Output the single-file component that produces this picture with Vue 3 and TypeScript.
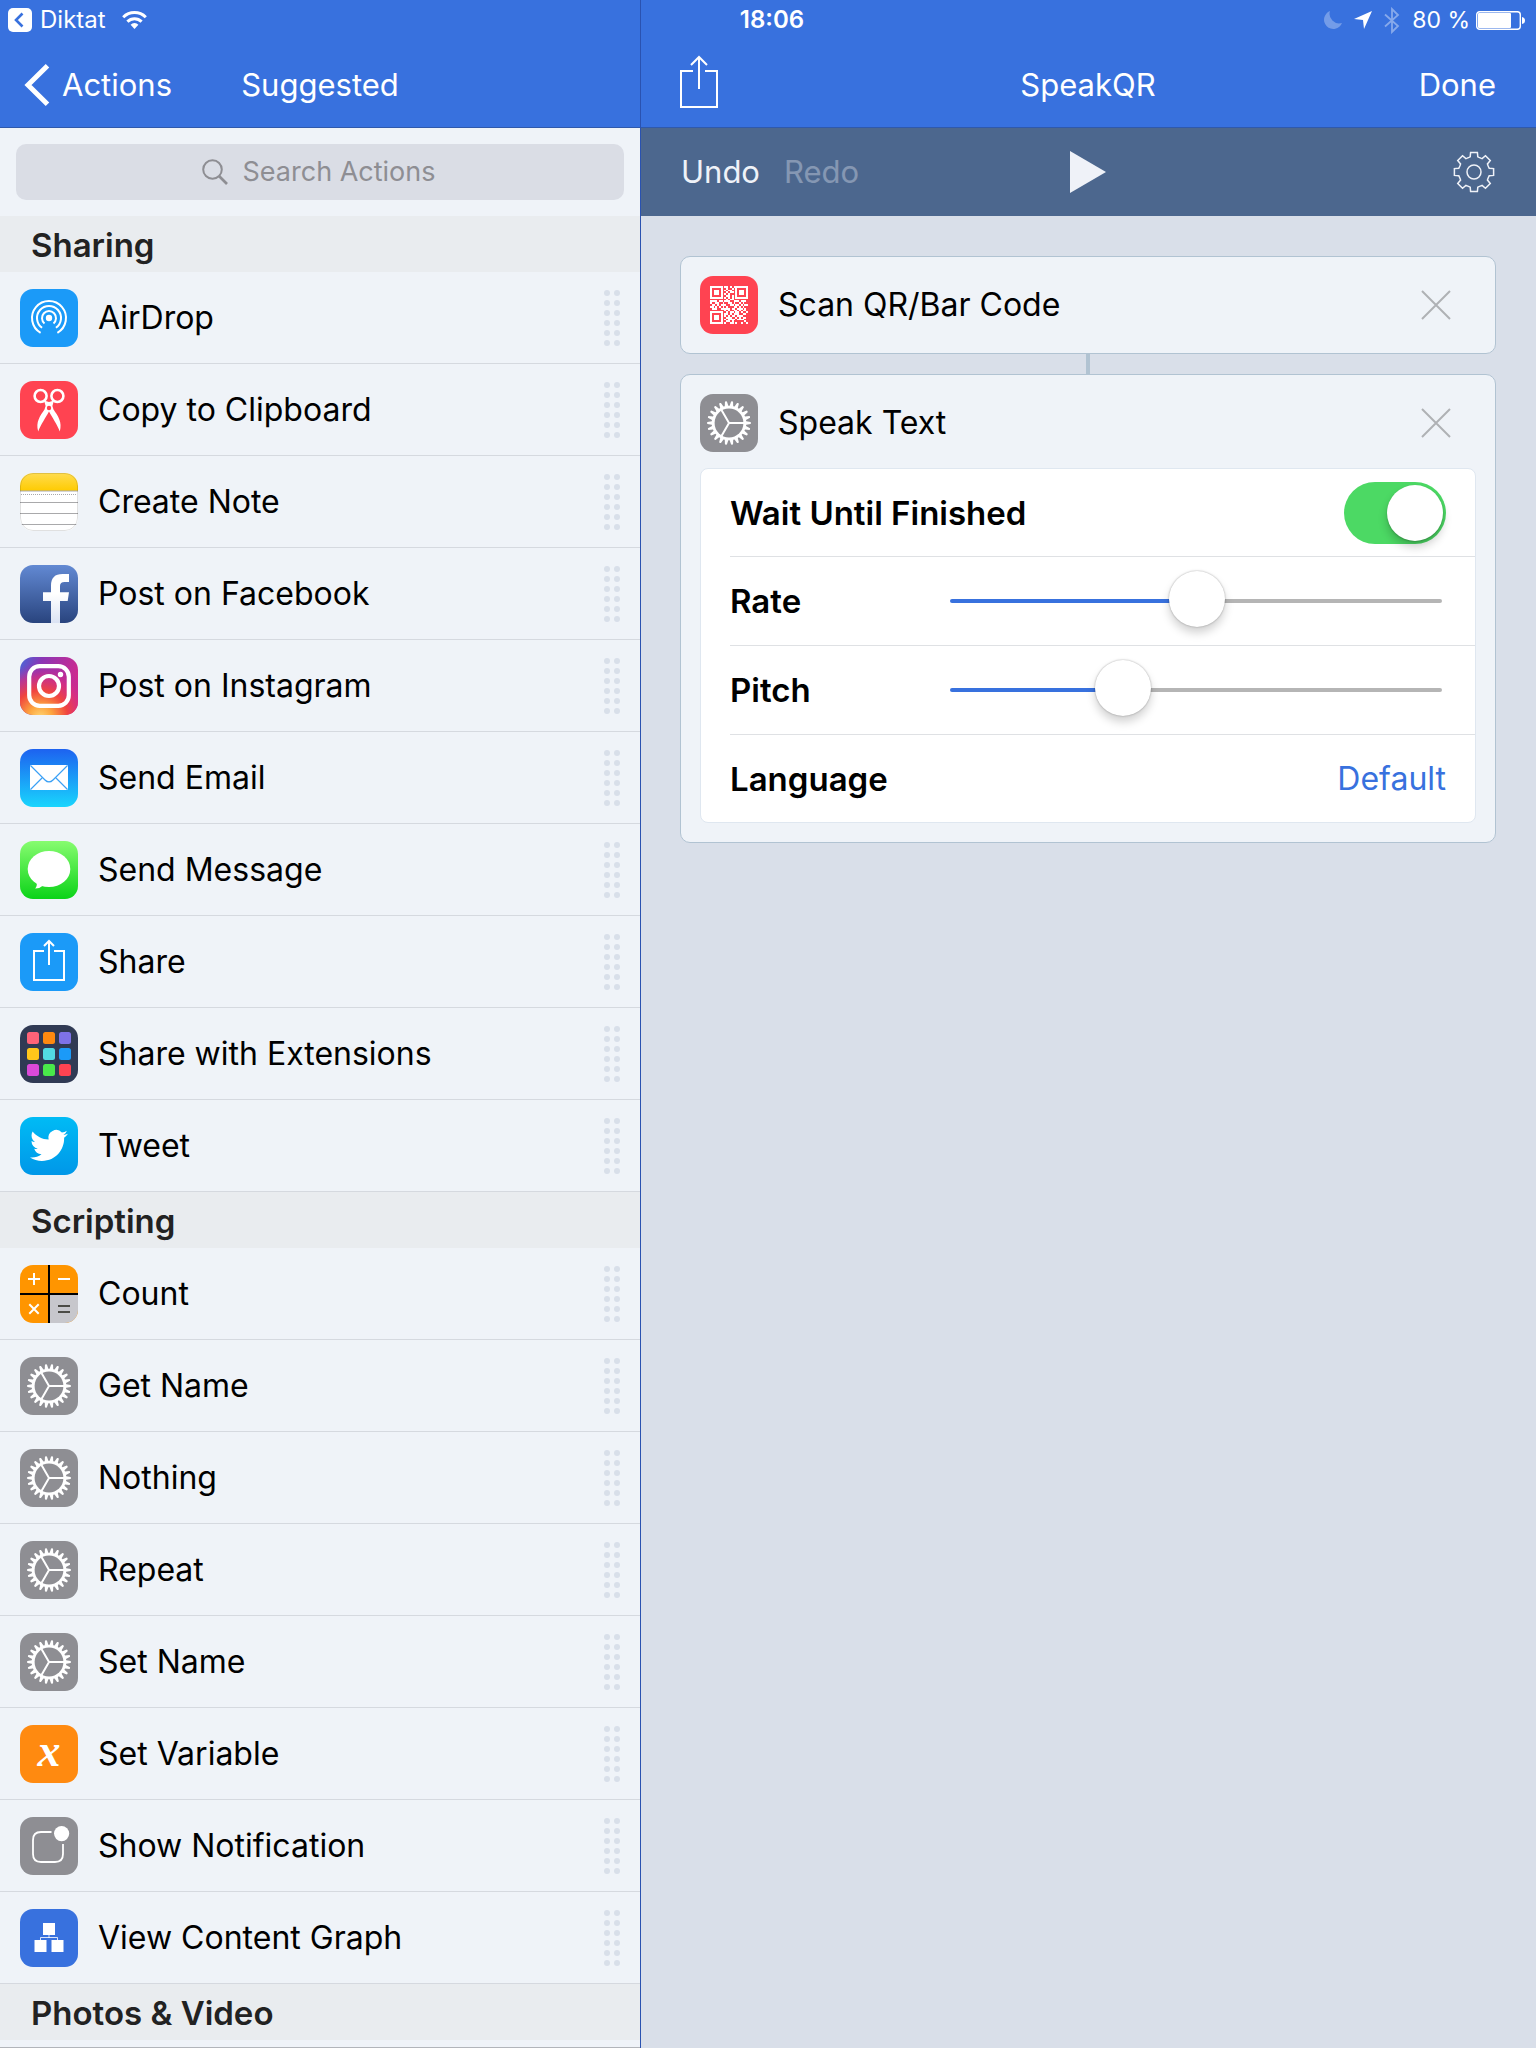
<script setup lang="ts">
import { computed, ref } from 'vue'

type IconName =
  | 'airdrop' | 'scissors' | 'note' | 'facebook' | 'instagram' | 'mail' | 'message' | 'share'
  | 'extensions' | 'twitter' | 'calculator' | 'gear' | 'variable' | 'notification' | 'graph'

interface Action { label: string; icon: IconName }
interface Section { title: string; actions: Action[] }

const sections: Section[] = [
  {
    title: 'Sharing',
    actions: [
      { label: 'AirDrop', icon: 'airdrop' },
      { label: 'Copy to Clipboard', icon: 'scissors' },
      { label: 'Create Note', icon: 'note' },
      { label: 'Post on Facebook', icon: 'facebook' },
      { label: 'Post on Instagram', icon: 'instagram' },
      { label: 'Send Email', icon: 'mail' },
      { label: 'Send Message', icon: 'message' },
      { label: 'Share', icon: 'share' },
      { label: 'Share with Extensions', icon: 'extensions' },
      { label: 'Tweet', icon: 'twitter' },
    ],
  },
  {
    title: 'Scripting',
    actions: [
      { label: 'Count', icon: 'calculator' },
      { label: 'Get Name', icon: 'gear' },
      { label: 'Nothing', icon: 'gear' },
      { label: 'Repeat', icon: 'gear' },
      { label: 'Set Name', icon: 'gear' },
      { label: 'Set Variable', icon: 'variable' },
      { label: 'Show Notification', icon: 'notification' },
      { label: 'View Content Graph', icon: 'graph' },
    ],
  },
  { title: 'Photos & Video', actions: [] },
]

const extensionColors = [
  '#ff6378', '#ff8a10', '#7e72e8',
  '#ffc61a', '#52dbe2', '#1b9af8',
  '#db49d8', '#49e84a', '#ff4351',
]

const query = ref('')
const waitUntilFinished = ref(true)
const rate = ref(502)
const pitch = ref(333)

// The filled part of a track ends under the middle of its thumb.
const fill = (value: number) => ({ '--fill': `${value / 10}%` })
const rateFill = computed(() => fill(rate.value))
const pitchFill = computed(() => fill(pitch.value))

type Point = [number, number]

function gearPath(teeth: number, center: number, outline: Point[]): string {
  const points: string[] = []
  for (let i = 0; i < teeth; i++) {
    const a = (i * 2 * Math.PI) / teeth
    for (const [r, w] of outline) {
      const x = center + r * Math.cos(a) - w * Math.sin(a)
      const y = center + r * Math.sin(a) + w * Math.cos(a)
      points.push(`${x.toFixed(2)} ${y.toFixed(2)}`)
    }
  }
  return `M${points.join('L')}Z`
}

const scriptGear = gearPath(22, 29, [[17.2, -1.8], [21.6, -1], [22, 0], [21.6, 1], [17.2, 1.8]])
const settingsGear = gearPath(8, 21, [[14.6, -5], [15.2, -3.8], [19.6, -3.4], [19.6, 3.4], [15.2, 3.8], [14.6, 5]])

const qrRows = [
  '111111101101011111111',
  '100000100100101000001',
  '101110101011001011101',
  '101110100101101011101',
  '101110101010001011101',
  '100000100110101000001',
  '111111101010101111111',
  '000000000101100000000',
  '111101101110011101110',
  '100110010011010010100',
  '011010111001101101011',
  '110101010100011010100',
  '011100111110110111010',
  '000000001010011010110',
  '111111100101101101001',
  '100000101101011100110',
  '101110101010110111000',
  '101110100111001010110',
  '101110101011110111100',
  '100000100110100000010',
  '111111101001101001001',
]
const qrPath = qrRows
  .flatMap((row, y) => [...row].map((c, x) => (c === '1' ? `M${x} ${y}h1v1h-1z` : '')))
  .join('')
</script>

<template>
  <div class="app">
    <div class="status">
      <div class="status-left">
        <svg class="status-back" viewBox="0 0 24 24" aria-hidden="true">
          <rect width="24" height="24" rx="5" fill="#fff" />
          <path d="M14.500 5.500L8 12l6.500 6.500" fill="none" stroke="#3871de" stroke-width="2.600" />
        </svg>
        <span>Diktat</span>
        <svg class="status-wifi" viewBox="0 0 25 18" aria-hidden="true">
          <g fill="none" stroke="#fff" stroke-width="3">
            <path d="M1.200 6.200a16 16 0 0 1 22.600 0" />
            <path d="M5.400 10.600a10 10 0 0 1 14.200 0" />
          </g>
          <path d="M12.500 18l-3.900-4.300a5.600 5.600 0 0 1 7.800 0z" fill="#fff" />
        </svg>
      </div>
      <time class="status-time">18:06</time>
      <div class="status-right">
        <svg class="i18" viewBox="0 0 18 18" aria-hidden="true">
          <path d="M6 0a9.300 9.300 0 1 0 12 12A9.600 9.600 0 0 1 6 0z" fill="#fff" opacity=".3" />
        </svg>
        <svg class="i18" viewBox="0 0 18 18" aria-hidden="true">
          <path d="M18 0L0 8l9 1 1 9z" fill="#fff" />
        </svg>
        <svg class="status-bt" viewBox="0 0 16 27" aria-hidden="true">
          <path d="M1 7.500l13 11.500-6 6V2l6 6L1 19.500" fill="none" stroke="#fff" stroke-width="1.800" opacity=".4" />
        </svg>
        <span class="battery-text">80 %</span>
        <svg class="status-battery" viewBox="0 0 49 19" aria-hidden="true">
          <rect x=".7" y=".7" width="43.600" height="17.600" rx="3" fill="none" stroke="#fff" stroke-width="1.400" />
          <rect x="2" y="2" width="33" height="15" rx="1" fill="#fff" />
          <path d="M46 6q3 .5 3 3.500t-3 3.500z" fill="#fff" />
        </svg>
      </div>
    </div>

    <aside class="sidebar">
      <header class="nav">
        <button class="nav-back" type="button">
          <svg viewBox="0 0 26 42" aria-hidden="true">
            <path d="M23.500 1.800L4 21l19.500 19.200" fill="none" stroke="#fff" stroke-width="5" />
          </svg>
          <span>Actions</span>
        </button>
        <h1>Suggested</h1>
      </header>

      <div class="search">
        <label class="search-field">
          <svg viewBox="0 0 26 26" aria-hidden="true">
            <circle cx="10.500" cy="10.500" r="9.300" fill="none" stroke="#8e8e93" stroke-width="2" />
            <path d="M17 17l8 8" stroke="#8e8e93" stroke-width="2.600" />
          </svg>
          <input v-model="query" type="search" placeholder="Search Actions" aria-label="Search Actions" />
        </label>
      </div>

      <section v-for="section in sections" :key="section.title">
        <h2>{{ section.title }}</h2>
        <ul>
          <li v-for="action in section.actions" :key="action.label">
            <button class="action" type="button">
              <svg class="icon" viewBox="0 0 58 58" aria-hidden="true">
                <g v-if="action.icon === 'airdrop'">
                  <rect width="58" height="58" fill="#1b9af8" />
                  <circle cx="29" cy="29" r="3.200" fill="#fff" />
                  <g fill="none" stroke="#fff" stroke-width="2">
                    <path d="M24.500 34.400a7 7 0 1 1 9 0" />
                    <path d="M22.100 38.800a12 12 0 1 1 13.800 0" />
                    <path d="M20.600 43.800a17 17 0 1 1 16.800 0" />
                  </g>
                </g>
                <g v-else-if="action.icon === 'scissors'">
                  <rect width="58" height="58" fill="#ff4351" />
                  <g fill="none" stroke="#fff" stroke-width="2.600">
                    <circle cx="20.600" cy="15" r="6" />
                    <circle cx="37.400" cy="15" r="6" />
                  </g>
                  <path d="M24 19.500L29 21l5-1.500-1.600 5.500 1.100 3.500C38 35 42.500 41 39.800 50.500 37.500 44 32 36 29 30.500 26 36 20.500 44 18.200 50.500 15.500 41 20 35 24.500 28.500l1.100-3.500z" fill="#fff" />
                  <circle cx="29" cy="27" r="2.200" fill="#ff4351" />
                </g>
                <g v-else-if="action.icon === 'note'">
                  <defs>
                    <linearGradient id="note-top" x2="0" y2="1">
                      <stop stop-color="#ffdc50" />
                      <stop offset="1" stop-color="#fecb00" />
                    </linearGradient>
                  </defs>
                  <rect width="58" height="58" fill="#fff" />
                  <rect width="58" height="18" fill="url(#note-top)" />
                  <path d="M0 18h58M0 29.500h58M0 40.500h58M0 51.500h58" stroke="#a9a9ab" />
                  <path d="M1 21.500h56" stroke="#a9a9ab" stroke-dasharray="1 1" />
                  <rect x=".5" y=".5" width="57" height="57" rx="12.500" fill="none" stroke="#000" stroke-opacity=".12" />
                </g>
                <g v-else-if="action.icon === 'facebook'">
                  <defs>
                    <linearGradient id="fb-back" x2="0" y2="1">
                      <stop stop-color="#6289d3" />
                      <stop offset="1" stop-color="#29447e" />
                    </linearGradient>
                    <linearGradient id="fb-mark" x2="0" y2="1">
                      <stop offset=".4" stop-color="#fff" />
                      <stop offset="1" stop-color="#dbe3f3" />
                    </linearGradient>
                  </defs>
                  <rect width="58" height="58" fill="url(#fb-back)" />
                  <path d="M31 58V36h-8v-8.700h8V20.500Q31 9 42.500 9H49v8h-4.500Q40 17 40 21v6.300h9L47.700 36H40v22z" fill="url(#fb-mark)" />
                </g>
                <g v-else-if="action.icon === 'instagram'">
                  <defs>
                    <linearGradient id="ig-base" x1="0" x2="1" y2=".35">
                      <stop stop-color="#4668d8" />
                      <stop offset=".35" stop-color="#8a35b5" />
                      <stop offset="1" stop-color="#d02a8d" />
                    </linearGradient>
                    <radialGradient id="ig-glow" cx=".35" cy="1.050" r=".95">
                      <stop stop-color="#ffd776" />
                      <stop offset=".22" stop-color="#fda53f" />
                      <stop offset=".5" stop-color="#f0443f" />
                      <stop offset=".75" stop-color="#d92e7f" stop-opacity=".7" />
                      <stop offset="1" stop-color="#a02cb0" stop-opacity="0" />
                    </radialGradient>
                  </defs>
                  <rect width="58" height="58" fill="url(#ig-base)" />
                  <rect width="58" height="58" fill="url(#ig-glow)" />
                  <g fill="none" stroke="#fff" stroke-width="4.200">
                    <rect x="9.200" y="9.200" width="39.600" height="39.600" rx="10.500" />
                    <circle cx="29" cy="29" r="10" />
                  </g>
                  <circle cx="40.500" cy="17.500" r="2.700" fill="#fff" />
                </g>
                <g v-else-if="action.icon === 'mail'">
                  <defs>
                    <linearGradient id="mail-back" x2="0" y2="1">
                      <stop stop-color="#1d62f0" />
                      <stop offset="1" stop-color="#19d5fd" />
                    </linearGradient>
                  </defs>
                  <rect width="58" height="58" fill="url(#mail-back)" />
                  <rect x="10" y="16" width="38" height="25" rx="1" fill="#fff" />
                  <path d="M10.500 16.500L25 31q4 4 8 0l14.500-14.500M10.500 40.500L22 29m25.500 11.500L36 29" fill="none" stroke="#3aa0f5" stroke-width="1.200" />
                </g>
                <g v-else-if="action.icon === 'message'">
                  <defs>
                    <linearGradient id="msg-back" x2="0" y2="1">
                      <stop stop-color="#87fc70" />
                      <stop offset="1" stop-color="#0bd318" />
                    </linearGradient>
                  </defs>
                  <rect width="58" height="58" fill="url(#msg-back)" />
                  <ellipse cx="29" cy="28" rx="21.300" ry="18" fill="#fff" />
                  <path d="M16 40q2 4-.8 7.500 4.300.2 8.800-3.500z" fill="#fff" />
                </g>
                <g v-else-if="action.icon === 'share'">
                  <rect width="58" height="58" fill="#1b9af8" />
                  <path d="M24 18H14v29h30V18H34M29 32V8.500M24 13l5-5 5 5" fill="none" stroke="#fff" stroke-width="2" />
                </g>
                <g v-else-if="action.icon === 'extensions'">
                  <rect width="58" height="58" fill="#303a54" />
                  <rect
                    v-for="(color, i) in extensionColors"
                    :key="color"
                    :x="7 + (i % 3) * 16"
                    :y="7 + Math.floor(i / 3) * 16"
                    width="12"
                    height="12"
                    rx="2.500"
                    :fill="color"
                  />
                </g>
                <g v-else-if="action.icon === 'twitter'">
                  <defs>
                    <linearGradient id="tw-back" x2="0" y2="1">
                      <stop stop-color="#00bbf5" />
                      <stop offset="1" stop-color="#0097e8" />
                    </linearGradient>
                  </defs>
                  <rect width="58" height="58" fill="url(#tw-back)" />
                  <path transform="translate(10 9.500) scale(1.583)" fill="#fff" d="M23.953 4.570a10 10 0 0 1-2.825.775 4.958 4.958 0 0 0 2.163-2.723c-.951.555-2.005.959-3.127 1.184a4.920 4.920 0 0 0-8.384 4.482C7.690 8.095 4.067 6.130 1.640 3.162a4.822 4.822 0 0 0-.666 2.475c0 1.710.870 3.213 2.188 4.096a4.904 4.904 0 0 1-2.228-.616v.060a4.923 4.923 0 0 0 3.946 4.827 4.996 4.996 0 0 1-2.212.085 4.936 4.936 0 0 0 4.604 3.417 9.867 9.867 0 0 1-6.102 2.105c-.390 0-.779-.023-1.170-.067a13.995 13.995 0 0 0 7.557 2.209c9.053 0 13.998-7.496 13.998-13.985 0-.210 0-.420-.015-.630A9.935 9.935 0 0 0 24 4.590z" />
                </g>
                <g v-else-if="action.icon === 'calculator'">
                  <rect width="58" height="58" fill="#ff9500" />
                  <rect x="29" y="29" width="29" height="29" fill="#c7c7cc" />
                  <path d="M29 0v58M0 29h58" stroke="#000" stroke-width="2" />
                  <path d="M8 14h12M14 8v12M38 14h12M9.300 39.300l9.400 9.400M18.700 39.300l-9.400 9.400" stroke="#fff" stroke-width="2" />
                  <path d="M38 41h12M38 47h12" stroke="#4c4c46" stroke-width="2" />
                </g>
                <g v-else-if="action.icon === 'gear'">
                  <rect width="58" height="58" fill="#8e8e93" />
                  <path :d="scriptGear" fill="#fff" />
                  <circle cx="29" cy="29" r="14.400" fill="#8e8e93" />
                  <path d="M29 29h15M29 29l-7.500-13M29 29l-7.500 13" stroke="#fff" stroke-width="2" />
                </g>
                <g v-else-if="action.icon === 'variable'">
                  <rect width="58" height="58" fill="#ff8a10" />
                  <text class="variable-glyph" x="29" y="41" text-anchor="middle">x</text>
                </g>
                <g v-else-if="action.icon === 'notification'">
                  <rect width="58" height="58" fill="#8e8e93" />
                  <path d="M31.500 15H21q-8 0-8 8v14q0 8 8 8h14q8 0 8-8V27" fill="none" stroke="#fff" stroke-width="1.800" />
                  <circle cx="41.600" cy="16.600" r="7.600" fill="#fff" />
                </g>
                <g v-else>
                  <rect width="58" height="58" fill="#3871de" />
                  <path d="M23 14h12v12H23zM14.500 31h12v12h-12zM31.500 31h12v12h-12z" fill="#fff" />
                  <path d="M29 26v3M20.500 31v-2.500h17V31" fill="none" stroke="#fff" stroke-opacity=".8" />
                </g>
              </svg>
              <span class="action-label">{{ action.label }}</span>
              <span class="grip" aria-hidden="true"><i v-for="n in 12" :key="n" /></span>
            </button>
          </li>
        </ul>
      </section>
    </aside>

    <main class="editor">
      <header class="nav">
        <button class="nav-share" type="button" aria-label="Share">
          <svg viewBox="1 0 40 60" aria-hidden="true">
            <path d="M14 16H2v36h36V16H26M20 34V2M12 10l8-8 8 8" fill="none" stroke="#fff" stroke-width="2" />
          </svg>
        </button>
        <h1>SpeakQR</h1>
        <button class="nav-done" type="button">Done</button>
      </header>

      <div class="toolbar">
        <div class="history">
          <button type="button">Undo</button>
          <button type="button" disabled>Redo</button>
        </div>
        <button class="tool" type="button" aria-label="Run workflow">
          <svg class="play" viewBox="0 0 36 42" aria-hidden="true"><path d="M0 0l36 21L0 42z" fill="#eff2f8" /></svg>
        </button>
        <button class="tool tool-end" type="button" aria-label="Settings">
          <svg class="settings" viewBox="0 0 42 42" aria-hidden="true">
            <g fill="none" stroke="#eff2f8" stroke-width="1.500">
              <path :d="settingsGear" />
              <circle cx="21" cy="21" r="7" />
            </g>
          </svg>
        </button>
      </div>

      <div class="canvas">
        <article class="card">
          <div class="card-head">
            <svg class="icon" viewBox="0 0 58 58" aria-hidden="true">
              <rect width="58" height="58" fill="#ff4351" />
              <path :d="qrPath" transform="translate(10 10) scale(1.810)" fill="#fff" shape-rendering="crispEdges" />
            </svg>
            <h3>Scan QR/Bar Code</h3>
            <button class="remove" type="button" aria-label="Remove Scan QR/Bar Code">
              <svg viewBox="0 0 30 30" aria-hidden="true"><path d="M1 1l28 28M29 1L1 29" stroke="#afb1b5" stroke-width="2" /></svg>
            </button>
          </div>
        </article>
        <div class="connector" />
        <article class="card">
          <div class="card-head">
            <svg class="icon" viewBox="0 0 58 58" aria-hidden="true">
              <rect width="58" height="58" fill="#8e8e93" />
              <path :d="scriptGear" fill="#fff" />
              <circle cx="29" cy="29" r="14.400" fill="#8e8e93" />
              <path d="M29 29h15M29 29l-7.500-13M29 29l-7.500 13" stroke="#fff" stroke-width="2" />
            </svg>
            <h3>Speak Text</h3>
            <button class="remove" type="button" aria-label="Remove Speak Text">
              <svg viewBox="0 0 30 30" aria-hidden="true"><path d="M1 1l28 28M29 1L1 29" stroke="#afb1b5" stroke-width="2" /></svg>
            </button>
          </div>
          <div class="options">
            <div class="option">
              <label for="wait">Wait Until Finished</label>
              <input id="wait" v-model="waitUntilFinished" class="switch" type="checkbox" role="switch" />
            </div>
            <div class="option">
              <label for="rate">Rate</label>
              <input id="rate" v-model.number="rate" class="slider" type="range" min="0" max="1000" :style="rateFill" />
            </div>
            <div class="option">
              <label for="pitch">Pitch</label>
              <input id="pitch" v-model.number="pitch" class="slider" type="range" min="0" max="1000" :style="pitchFill" />
            </div>
            <div class="option">
              <span id="language">Language</span>
              <button class="value" type="button" aria-describedby="language">Default</button>
            </div>
          </div>
        </article>
      </div>
    </main>
  </div>
</template>

<style>
body {
  margin: 0;
}
</style>

<style scoped>
* {
  box-sizing: border-box;
}

.app {
  position: relative;
  display: grid;
  grid-template-columns: 5fr 7fr;
  min-height: 100vh;
  background: #d9dfe9;
  color: #000;
  font: 400 32px/40px Inter, "Liberation Sans", sans-serif;
}

button {
  margin: 0;
  padding: 0;
  border: 0;
  background: none;
  color: inherit;
  font: inherit;
  text-align: left;
  cursor: pointer;
}

svg {
  display: block;
  flex: none;
}

h1,
h2,
h3,
ul {
  margin: 0;
  padding: 0;
  font: inherit;
  list-style: none;
}

/* The status bar lies over both navigation bars. */
.status {
  position: absolute;
  inset: 0 0 auto;
  display: grid;
  grid-template-columns: 1fr auto 1fr;
  align-items: center;
  height: 40px;
  padding-left: 8px;
  color: #fff;
  font-size: 24px;
}

.status-left,
.status-right {
  display: flex;
  align-items: center;
}

.status-left {
  gap: 8px;
}

.status-right {
  justify-content: flex-end;
  gap: 12px;
  padding-right: 11px;
}

.status-back {
  width: 24px;
  height: 24px;
}

.status-wifi {
  width: 25px;
  height: 18px;
  margin-left: 8px;
}

.status-time {
  font-weight: 600;
}

.battery-text {
  font-size: 23px;
}

.i18 {
  width: 18px;
  height: 18px;
}

.status-bt {
  width: 16px;
  height: 27px;
}

.status-battery {
  width: 49px;
  height: 19px;
  margin-left: -6px;
}

.sidebar {
  border-bottom: 1px solid #b2b5ba;
  background: #eff3f8;
}

.editor {
  border-left: 1px solid #2a52b0;
}

.nav {
  display: grid;
  grid-template-columns: 1fr auto 1fr;
  align-items: center;
  height: 128px;
  padding: 42px 40px 0 39px;
  border-bottom: 1px solid #2f59ab;
  background: #3871de;
  color: #fff;
  font-size: 31px;
}

.sidebar .nav {
  padding: 42px 24px 0;
}

.nav-back {
  display: flex;
  align-items: center;
  gap: 12px;
}

.nav-back svg {
  width: 26px;
  height: 42px;
}

.nav-share svg {
  width: 40px;
  height: 60px;
}

.nav-done {
  justify-self: end;
}

.search {
  padding: 16px;
}

.search-field {
  display: flex;
  align-items: center;
  justify-content: center;
  gap: 15px;
  height: 56px;
  border-radius: 10px;
  background: #dadde5;
}

.search-field svg {
  width: 26px;
  height: 26px;
}

.search-field input {
  width: 196px;
  padding: 0;
  border: 0;
  outline: 0;
  appearance: none;
  background: none;
  color: #000;
  font: inherit;
  font-size: 27px;
}

.search-field input::-webkit-search-cancel-button {
  display: none;
}

.search-field input::placeholder {
  color: #8e8e93;
  opacity: 1;
}

h2 {
  padding: 9px 31px 7px;
  background: #e9ecef;
  color: #222;
  font-size: 33px;
  font-weight: 600;
}

.action {
  display: flex;
  align-items: center;
  width: 100%;
  height: 92px;
  padding: 0 20px;
  border-bottom: 1px solid #d5d9df;
}

.icon {
  width: 58px;
  height: 58px;
  border-radius: 13px;
}

.action-label {
  flex: 1;
  padding-left: 20px;
  white-space: nowrap;
}

.grip {
  display: grid;
  grid-template-columns: 6px 6px;
  gap: 4px;
}

.grip i {
  height: 6px;
  border-radius: 50%;
  background: #d8dfe9;
}

.variable-glyph {
  fill: #fff;
  font: italic 700 46px "Liberation Serif", serif;
}

.toolbar {
  display: grid;
  grid-template-columns: 1fr auto 1fr;
  align-items: center;
  height: 88px;
  padding: 0 41px 0 40px;
  background: #4c678e;
  color: #eff2f8;
  font-size: 31px;
}

.history {
  display: flex;
  gap: 24px;
}

.history button:disabled {
  opacity: .35;
}

.play {
  width: 36px;
  height: 42px;
}

.settings {
  width: 42px;
  height: 42px;
}

.tool-end {
  justify-self: end;
}

.canvas {
  padding: 40px 40px 40px 39px;
}

.card {
  border: 1px solid #b1c3d2;
  border-radius: 10px;
  background: #eff3f8;
}

.card-head {
  display: flex;
  align-items: center;
  height: 96px;
  padding: 0 44px 0 19px;
}

.card-head h3 {
  flex: 1;
  padding-left: 20px;
}

.remove svg {
  width: 30px;
  height: 30px;
}

.connector {
  width: 4px;
  height: 20px;
  margin: 0 auto;
  background: #b1c3d2;
}

.options {
  margin: -3px 19px 19px;
  border: 1px solid #dfe7f0;
  border-radius: 8px;
  background: #fff;
}

.option {
  display: flex;
  align-items: center;
  justify-content: space-between;
  height: 89px;
  margin-left: 29px;
  padding-right: 29px;
  border-bottom: 1px solid #dfe1e4;
  font-size: 33px;
  font-weight: 600;
}

.option:first-child {
  height: 88px;
}

.option:last-child {
  height: 87px;
  border-bottom: 0;
}

.value {
  color: #3871de;
  font-size: 32px;
  font-weight: 400;
}

.switch {
  width: 102px;
  height: 62px;
  margin: 0;
  padding: 3px;
  appearance: none;
  border-radius: 31px;
  background: #d5d9df;
}

.switch::before {
  content: "";
  display: block;
  width: 56px;
  height: 56px;
  border-radius: 50%;
  background: #fff;
  box-shadow: 0 6px 10px rgba(0, 0, 0, .2), 0 1px 2px rgba(0, 0, 0, .2);
}

.switch:checked {
  background: #4cd964;
}

.switch:checked::before {
  margin-left: 40px;
}

.slider {
  flex: 0 1 492px;
  height: 56px;
  margin: 0 4px 0 24px;
  appearance: none;
  background: none;
}

.slider::-webkit-slider-runnable-track {
  height: 4px;
  border-radius: 2px;
  background: linear-gradient(90deg, #3871de var(--fill), #b5b5b5 var(--fill));
}

.slider::-webkit-slider-thumb {
  width: 56px;
  height: 56px;
  margin-top: -28px;
  appearance: none;
  border-radius: 50%;
  background: #fff;
  box-shadow: 0 6px 10px rgba(0, 0, 0, .18), 0 0 2px rgba(0, 0, 0, .35);
}
</style>
